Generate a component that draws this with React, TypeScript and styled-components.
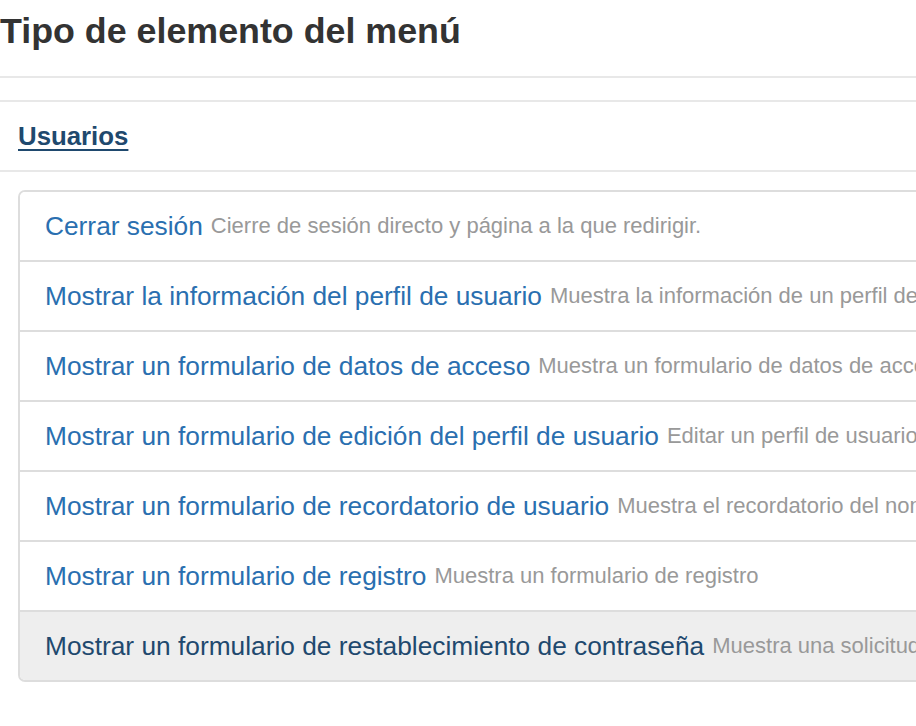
import React from "react";
import styled, { createGlobalStyle } from "styled-components";

const Global = createGlobalStyle`
  html, body { margin: 0; padding: 0; background: #fff; }
  body { font-family: "Liberation Sans", Arial, Helvetica, sans-serif; overflow: hidden; }
`;

const Page = styled.div`
  width: 916px;
  height: 726px;
  overflow: hidden;
`;

const Title = styled.h2`
  margin: 0;
  padding: 9px 0 0 0;
  height: 76px;
  box-sizing: border-box;
  font-size: 35.8px;
  line-height: 44px;
  font-weight: 700;
  color: #333;
  white-space: nowrap;
`;

const Divider = styled.div<{ $gap?: number }>`
  height: 2px;
  background: #e8e8e8;
  margin-top: ${(p) => p.$gap ?? 0}px;
`;

const SectionHead = styled.div`
  height: 68px;
  display: flex;
  align-items: center;
  padding-left: 18px;
`;

const SectionLink = styled.a`
  font-size: 25.8px;
  font-weight: 700;
  color: #1f496e;
  text-decoration: underline;
  text-decoration-thickness: 2px;
  text-underline-offset: 4px;
`;

const List = styled.ul`
  list-style: none;
  margin: 18px 0 0 18px;
  padding: 0;
  width: 1500px;
  border: 2px solid #ddd;
  border-radius: 7px;
  overflow: hidden;
`;

const Item = styled.li<{ $active?: boolean }>`
  height: 68px;
  display: flex;
  align-items: center;
  padding-left: 25px;
  white-space: nowrap;
  background: ${(p) => (p.$active ? "#eeeeee" : "#fff")};
  & + & { border-top: 2px solid #ddd; }
`;

const ItemTitle = styled.a<{ $active?: boolean }>`
  font-size: 26.3px;
  color: ${(p) => (p.$active ? "#1f496e" : "#2a6fb0")};
  text-decoration: none;
`;

const ItemDesc = styled.small`
  font-size: 22px;
  color: #999;
  margin-left: 8px;
`;

const items = [
  ["Cerrar sesión", "Cierre de sesión directo y página a la que redirigir."],
  ["Mostrar la información del perfil de usuario", "Muestra la información de un perfil de usuario."],
  ["Mostrar un formulario de datos de acceso", "Muestra un formulario de datos de acceso."],
  ["Mostrar un formulario de edición del perfil de usuario", "Editar un perfil de usuario."],
  ["Mostrar un formulario de recordatorio de usuario", "Muestra el recordatorio del nombre de usuario."],
  ["Mostrar un formulario de registro", "Muestra un formulario de registro"],
  ["Mostrar un formulario de restablecimiento de contraseña", "Muestra una solicitud de restablecimiento de contraseña."],
];

export default function App() {
  return (
    <Page>
      <Global />
      <Title>Tipo de elemento del menú</Title>
      <Divider />
      <Divider $gap={22} />
      <SectionHead>
        <SectionLink href="#">Usuarios</SectionLink>
      </SectionHead>
      <Divider />
      <List>
        {items.map(([t, d], i) => {
          const active = i === items.length - 1;
          return (
            <Item key={t} $active={active}>
              <ItemTitle href="#" $active={active}>{t}</ItemTitle>
              <ItemDesc>{d}</ItemDesc>
            </Item>
          );
        })}
      </List>
    </Page>
  );
}
